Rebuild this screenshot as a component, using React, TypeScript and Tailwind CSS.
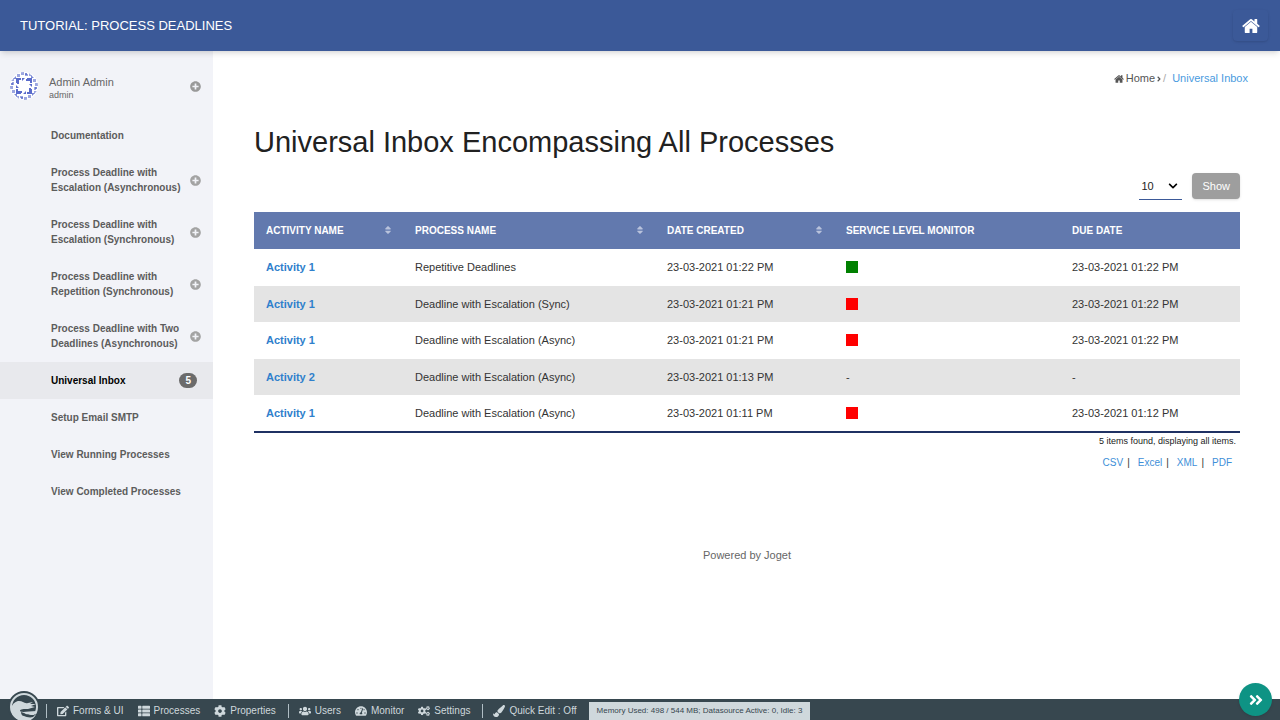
import {
  FaAngleDoubleRight,
  FaAngleRight,
  FaChevronDown,
  FaCog,
  FaCogs,
  FaEdit,
  FaPaintBrush,
  FaPlusCircle,
  FaSort,
  FaTachometerAlt,
  FaThList,
  FaUsers,
} from "react-icons/fa";

type MenuItem = {
  label: string;
  expandable?: boolean;
  active?: boolean;
  count?: number;
};

const MENU: MenuItem[] = [
  { label: "Documentation" },
  { label: "Process Deadline with Escalation (Asynchronous)", expandable: true },
  { label: "Process Deadline with Escalation (Synchronous)", expandable: true },
  { label: "Process Deadline with Repetition (Synchronous)", expandable: true },
  { label: "Process Deadline with Two Deadlines (Asynchronous)", expandable: true },
  { label: "Universal Inbox", active: true, count: 5 },
  { label: "Setup Email SMTP" },
  { label: "View Running Processes" },
  { label: "View Completed Processes" },
];

const COLUMNS = [
  { label: "ACTIVITY NAME", width: "w-[149px]", sortable: true },
  { label: "PROCESS NAME", width: "w-[252px]", sortable: true },
  { label: "DATE CREATED", width: "w-[179px]", sortable: true },
  { label: "SERVICE LEVEL MONITOR", width: "w-[226px]", sortable: false },
  { label: "DUE DATE", width: "", sortable: false },
];

const ROWS = [
  { activity: "Activity 1", process: "Repetitive Deadlines", created: "23-03-2021 01:22 PM", sla: "bg-[#008000]", due: "23-03-2021 01:22 PM" },
  { activity: "Activity 1", process: "Deadline with Escalation (Sync)", created: "23-03-2021 01:21 PM", sla: "bg-[#ff0000]", due: "23-03-2021 01:22 PM" },
  { activity: "Activity 1", process: "Deadline with Escalation (Async)", created: "23-03-2021 01:21 PM", sla: "bg-[#ff0000]", due: "23-03-2021 01:22 PM" },
  { activity: "Activity 2", process: "Deadline with Escalation (Async)", created: "23-03-2021 01:13 PM", sla: null, due: "-" },
  { activity: "Activity 1", process: "Deadline with Escalation (Async)", created: "23-03-2021 01:11 PM", sla: "bg-[#ff0000]", due: "23-03-2021 01:12 PM" },
];

const EXPORTS = ["CSV", "Excel", "XML", "PDF"];

const ADMIN_GROUPS = [
  [
    { label: "Forms & UI", icon: FaEdit },
    { label: "Processes", icon: FaThList },
    { label: "Properties", icon: FaCog },
  ],
  [
    { label: "Users", icon: FaUsers },
    { label: "Monitor", icon: FaTachometerAlt },
    { label: "Settings", icon: FaCogs },
  ],
  [{ label: "Quick Edit : Off", icon: FaPaintBrush }],
];

function HomeIcon({ className }: { className: string }) {
  return (
    <svg viewBox="0 128 1664 1536" fill="currentColor" className={className} aria-hidden="true">
      <path d="M1408 992v480q0 26-19 45t-45 19h-384v-384h-256v384h-384q-26 0-45-19t-19-45v-480q0-1 .5-3t.5-3l575-474 575 474q1 2 1 6zm223-69l-62 74q-8 9-21 11h-3q-13 0-21-7l-692-577-692 577q-12 8-24 7-13-2-21-11l-62-74q-8-10-7-23.5t11-21.5l719-599q32-26 76-26t76 26l244 204v-195q0-14 9-23t23-9h192q14 0 23 9t9 23v408l219 182q10 8 11 21.5t-7 23.5z" />
    </svg>
  );
}

function Avatar() {
  return (
    <svg viewBox="0 0 28 28" className="size-7 shrink-0 rounded-full bg-white" aria-hidden="true">
      {[0, 90, 180, 270].map((angle) => (
        <g key={angle} transform={`rotate(${angle} 14 14)`} fill="#5a6bcb">
          <path d="M7 2h3v3H7zM11 0h3v3h-3zM15 2h3v2h-3zM19 1l3 3h-3z" opacity=".6" />
          <path d="M6 6h5v2H8v3H6zM12 6h3l-3 3zM16 7h4v2h-4z" />
          <path d="M3 7l3-3v3zM1 11h2v2H1z" opacity=".8" />
        </g>
      ))}
    </svg>
  );
}

function JogetLogo() {
  return (
    <svg viewBox="0 0 32 32" className="size-8" aria-hidden="true">
      <circle cx="16" cy="16" r="16" fill="#37474f" />
      <circle cx="16" cy="16" r="13" fill="#37474f" stroke="#cfd8dc" strokeWidth="2" />
      <path
        d="M3 17C5 12 8 10 11 10c4 0 5 3 9 2l5-1-3 2h6l-5 2 4 1-7 2c-4 0-8 0-8 2 2 2 8 0 17 0-1 5-4 8-8 10H13C7 28 3 23 3 17z"
        fill="#cfd8dc"
      />
      <path d="M13 21c4 2 9 1 15 2l-3 3c-3 1-7 0-9-1-2 0-3-2-3-4z" fill="#37474f" />
      <path d="M15 21c4 1 8 0 13 1l-2 2c-4 0-8 0-11-3z" fill="#cfd8dc" />
    </svg>
  );
}

// Index of the space before the last two words
function splitAt(label: string) {
  return label.lastIndexOf(" ", label.lastIndexOf(" ") - 1);
}

function Sidebar() {
  return (
    <aside className="w-[213px] shrink-0 bg-[#f2f3f8]">
      <div className="flex h-[66px] items-center pt-1 pr-3 pl-2.5 text-[#666]">
        <Avatar />
        <div className="ml-[11px] flex-1 pt-1">
          <p className="text-[11px] leading-[14px]">Admin Admin</p>
          <p className="text-[9px] leading-[13px]">admin</p>
        </div>
        <button type="button" aria-label="Expand profile" className="text-[#999]">
          <FaPlusCircle className="size-[11px]" />
        </button>
      </div>
      <nav>
        {MENU.map((item) => (
          <a
            key={item.label}
            href="#"
            className={`flex items-center py-[11px] pr-3 pl-[51px] text-[10px] leading-[15px] font-bold ${
              item.active ? "bg-[#e8e9ed] text-black" : "text-[#5c5c5c]"
            }`}
          >
            <span className="flex-1 whitespace-nowrap">
              {item.expandable ? (
                <>
                  {/* "with Two" stays together on the first line */}
                  {item.label.slice(0, splitAt(item.label))}
                  <br />
                  {item.label.slice(splitAt(item.label) + 1)}
                </>
              ) : (
                item.label
              )}
            </span>
            {item.expandable && <FaPlusCircle className="size-[11px] shrink-0 text-[#a3a3a3]" />}
            {item.count && (
              <span className="mr-1 rounded-full bg-[#6b6b6b] px-1.5 text-[10px] text-white">{item.count}</span>
            )}
          </a>
        ))}
      </nav>
    </aside>
  );
}

function InboxTable() {
  return (
    <table className="w-full table-fixed border-b-2 border-[#1f3163] text-left text-[11px] text-[#333]">
      <thead>
        <tr className="h-[37px] bg-[#6279ae] text-[10px] text-white">
          {COLUMNS.map((col) => (
            <th key={col.label} scope="col" className={`pr-2.5 pl-3 font-bold ${col.width}`}>
              <span className="flex items-center justify-between">
                {col.label}
                {col.sortable && <FaSort className="size-2.5 text-[#b9c3dc]" />}
              </span>
            </th>
          ))}
        </tr>
      </thead>
      <tbody>
        {ROWS.map((row, i) => (
          <tr key={i} className="h-[37px] even:h-[36px] even:bg-[#e4e4e4]">
            <td className="px-3">
              <a href="#" className="font-bold text-[#2f80cc]">
                {row.activity}
              </a>
            </td>
            <td className="px-3">{row.process}</td>
            <td className="px-3">{row.created}</td>
            <td className="px-3">{row.sla ? <span className={`block size-3 ${row.sla}`} /> : "-"}</td>
            <td className="px-3">{row.due}</td>
          </tr>
        ))}
      </tbody>
    </table>
  );
}

function AdminBar() {
  return (
    <div className="fixed inset-x-0 bottom-0 flex h-[21px] items-center bg-[#37474f] pt-0.5 pl-2 text-[10px] text-[#cfd8dc]">
      <a href="#" aria-label="Joget" className="-mr-1.5 h-[29px] self-end">
        <JogetLogo />
      </a>
      {ADMIN_GROUPS.map((group, i) => (
        <div key={i} className="flex items-center gap-3.5">
          <span className="-mr-1 ml-3 h-3.5 w-px bg-[#b0bec5]" />
          {group.map(({ label, icon: Icon }) => (
            <a key={label} href="#" className="flex items-center gap-1 whitespace-nowrap">
              <Icon className="size-3" />
              {label}
            </a>
          ))}
        </div>
      ))}
      <p className="ml-3 self-end bg-[#cfd8dc] px-2 text-[8px] leading-[18px] whitespace-nowrap text-[#37474f]">
        Memory Used: 498 / 544 MB; Datasource Active: 0, Idle: 3
      </p>
      <button
        type="button"
        aria-label="Toggle admin bar"
        className="absolute right-2 bottom-1 flex size-[33px] items-center justify-center rounded-full bg-[#0e9384] text-white shadow"
      >
        <FaAngleDoubleRight className="size-4" />
      </button>
    </div>
  );
}

export default function App() {
  return (
    <div className="flex min-h-screen flex-col bg-white font-['Liberation_Sans',Arial,sans-serif]">
      <header className="relative flex h-[51px] items-center justify-between bg-[#3b5998] pr-3 pl-5 text-white shadow-md">
        <p className="text-[13px]">TUTORIAL: PROCESS DEADLINES</p>
        <a
          href="#"
          aria-label="Home"
          className="flex h-[31px] w-[35px] items-center justify-center rounded-sm shadow"
        >
          <HomeIcon className="size-[18px]" />
        </a>
      </header>

      <div className="flex flex-1">
        <Sidebar />
        <main className="min-w-0 flex-1 pr-10 pl-[41px]">
          <nav aria-label="Breadcrumb" className="-mr-2 flex items-center justify-end pt-5 text-[11px] leading-[15px] text-[#555]">
            <a href="#" className="flex items-center gap-0.5">
              <HomeIcon className="size-2.5" />
              Home
            </a>
            <FaAngleRight className="size-2" />
            <span className="mr-1.5 text-[#aaa]">/</span>
            <a href="#" className="text-[#4a9be0]">
              Universal Inbox
            </a>
          </nav>

          <h1 className="mt-9 text-[29px] leading-10 text-[#212121]">
            Universal Inbox Encompassing All Processes
          </h1>

          <form className="mt-[11px] mb-3 flex items-center justify-end gap-2.5">
            <div className="relative">
              <select
                aria-label="Items per page"
                className="h-[26px] w-[43px] appearance-none border-b border-[#3b5998] bg-transparent pl-0.5 text-[11px] text-[#222]"
              >
                <option>10</option>
              </select>
              <FaChevronDown className="pointer-events-none absolute top-2 right-1 size-2.5" />
            </div>
            <button type="button" className="h-[26px] rounded-sm bg-[#9e9e9e] px-2.5 text-[11px] text-white shadow-sm">
              Show
            </button>
          </form>

          <InboxTable />
          <p className="mt-0.5 pr-1 text-right text-[9px] leading-3 text-[#222]">5 items found, displaying all items.</p>
          <p className="mt-2 flex justify-end pr-2 text-[10px] leading-4 text-[#333]">
            {EXPORTS.map((name, i) => (
              <span key={name}>
                <a href="#" className="text-[#3d8fd8]">
                  {name}
                </a>
                {i < EXPORTS.length - 1 && <span className="mr-2 ml-1">|</span>}
              </span>
            ))}
          </p>

          <footer className="mt-[76px] pb-10 text-center text-[11px] leading-4 text-[#666]">Powered by Joget</footer>
        </main>
      </div>

      <AdminBar />
    </div>
  );
}
